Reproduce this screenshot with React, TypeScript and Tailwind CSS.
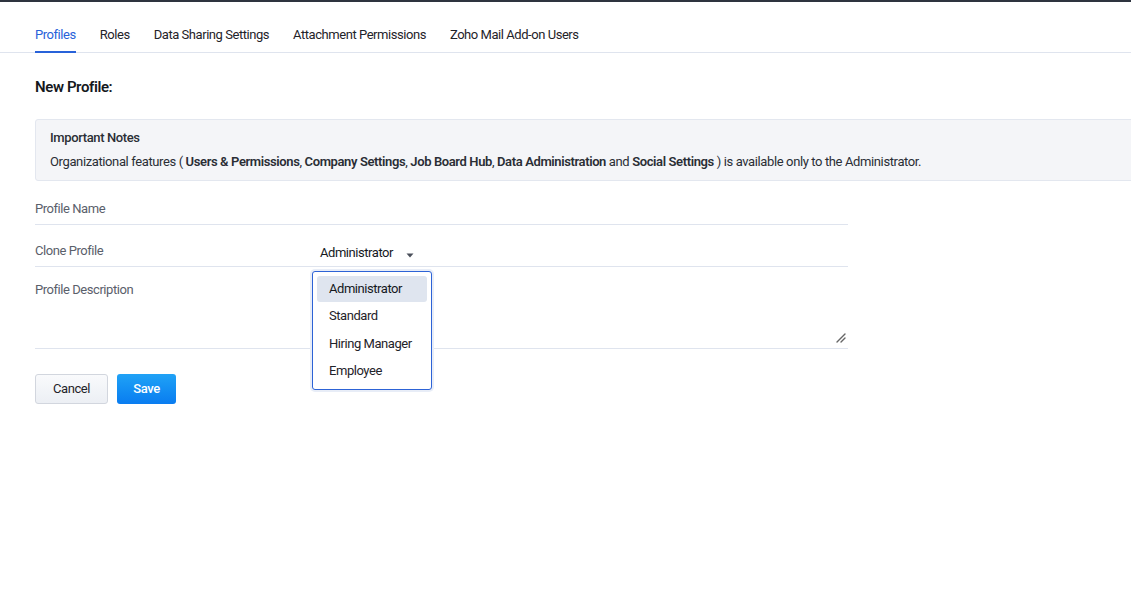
const tabs = ["Profiles", "Roles", "Data Sharing Settings", "Attachment Permissions", "Zoho Mail Add-on Users"];
const options = ["Administrator", "Standard", "Hiring Manager", "Employee"];

function Caret() {
  return (
    <svg width="8" height="5" viewBox="0 0 8 5" className="ml-[13px] mt-[8px]">
      <path d="M0.5 0.5 L7.5 0.5 L4 4.5 Z" fill="#4a4f5a" />
    </svg>
  );
}

function ResizeGrip() {
  return (
    <svg width="12" height="12" viewBox="0 0 12 12">
      <path d="M2 10 L10 2 M6 10 L10 6" stroke="#666" strokeWidth="1.4" strokeLinecap="round" />
    </svg>
  );
}

export default function App() {
  return (
    <div
      className="w-[1131px] h-[603px] bg-white overflow-hidden text-[#1f2329] text-[13px] leading-[16px] tracking-[-0.45px]"
      style={{ fontFamily: "Roboto, 'Liberation Sans', sans-serif" }}
    >
      <div className="h-[2px] bg-[#2e343f]" />

      <div className="flex gap-[24px] pl-[35px] border-b border-[#dfe4ee] h-[51px] items-end">
        {tabs.map((t, i) => (
          <div
            key={t}
            className={
              i === 0
                ? "pb-[8px] text-[#2862d9] border-b-2 border-[#2862d9] -mb-px"
                : "pb-[9px] text-[#1f2329]"
            }
          >
            {t}
          </div>
        ))}
      </div>

      <div className="pl-[35px]">
        <h1 className="mt-[25px] text-[15px] leading-[18px] font-semibold tracking-[-0.4px] text-[#15181d]">New Profile:</h1>

        <div className="mt-[23px] -mr-[4px] bg-[#f4f5f8] border border-[#e3e7ef] rounded-[3px] pl-[14px] pt-[10px] pb-[10px] tracking-[-0.38px]">
          <div className="font-medium text-[#2a2e35]">Important Notes</div>
          <div className="mt-[8px] text-[#2a2e35]">
            Organizational features ( <b className="font-semibold">Users &amp; Permissions</b>, <b className="font-semibold">Company Settings</b>,{" "}
            <b className="font-semibold">Job Board Hub</b>, <b className="font-semibold">Data Administration</b> and{" "}
            <b className="font-semibold">Social Settings</b> ) is available only to the Administrator.
          </div>
        </div>

        <div className="w-[813px] mt-[20px]">
          <div className="h-[24px] border-b border-[#dfe4ee] text-[#5a606b]">Profile Name</div>

          <div className="h-[42px] border-b border-[#dfe4ee] flex items-start">
            <div className="w-[285px] mt-[18px] text-[#5a606b]">Clone Profile</div>
            <div className="relative flex items-start mt-[20px]">
              <span className="text-[#15181d]">Administrator</span>
              <Caret />
              <div className="absolute left-[-8px] top-[26px] w-[120px] rounded-[3px] border border-[#2d63d6] bg-white ring-2 ring-[#e8edf7] p-[4px] z-10">
                {options.map((o, i) => (
                  <div
                    key={o}
                    className={
                      i === 0
                        ? "h-[26px] leading-[26px] pl-[12px] rounded-[3px] bg-[#dfe5ef] text-[#15181d]"
                        : "h-[27.5px] leading-[27.5px] pl-[12px] text-[#1f2329]"
                    }
                  >
                    {o}
                  </div>
                ))}
              </div>
            </div>
          </div>

          <div className="h-[82px] border-b border-[#dfe4ee] flex justify-between pt-[15px]">
            <div className="text-[#5a606b]">Profile Description</div>
            <div className="self-end mb-[4px] mr-[1px]">
              <ResizeGrip />
            </div>
          </div>
        </div>

        <div className="flex gap-[9px] mt-[25px]">
          <button className="w-[73px] h-[30px] rounded-[3px] border border-[#d2d6de] bg-gradient-to-b from-[#f9fafc] to-[#eceff4] text-[#1f2329]">
            Cancel
          </button>
          <button className="w-[59px] h-[30px] rounded-[3px] bg-gradient-to-b from-[#20a2f6] to-[#0a7cf0] text-white font-medium">
            Save
          </button>
        </div>
      </div>
    </div>
  );
}
